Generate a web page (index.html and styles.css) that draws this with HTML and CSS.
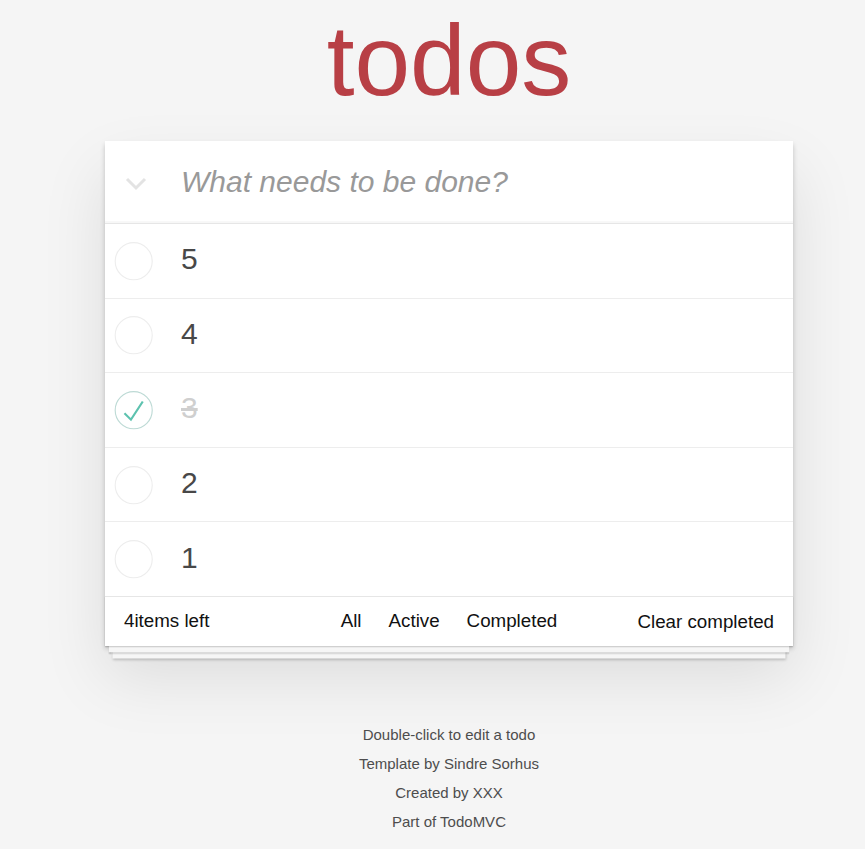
FILE: index.html
```html
<!DOCTYPE html>
<html lang="en">
<head>
<meta charset="utf-8">
<title>Todos</title>
<link rel="stylesheet" href="styles.css">
</head>
<body>
<section class="app">
  <h1 class="title">todos</h1>
  <div class="card">
    <header class="header">
      <span class="toggle-all">
        <svg width="22" height="14" viewBox="0 0 22 14"><polyline points="2,2 11,11 20,2" fill="none" stroke="#e3e3e3" stroke-width="3"/></svg>
      </span>
      <span class="new-todo">What needs to be done?</span>
    </header>
    <ul class="list">
      <li class="item">
        <svg class="check" width="50" height="50" viewBox="-10 -18 100 135"><circle cx="50" cy="50" r="50" fill="none" stroke="#ededed" stroke-width="3"/></svg>
        <span class="label">5</span>
      </li>
      <li class="item">
        <svg class="check" width="50" height="50" viewBox="-10 -18 100 135"><circle cx="50" cy="50" r="50" fill="none" stroke="#ededed" stroke-width="3"/></svg>
        <span class="label">4</span>
      </li>
      <li class="item done">
        <svg class="check" width="50" height="50" viewBox="-10 -18 100 135"><circle cx="50" cy="50" r="50" fill="none" stroke="#bddad5" stroke-width="3"/><path fill="#5dc2af" d="M72 25L42 71 27 56l-4 4 20 20 34-52z"/></svg>
        <span class="label">3</span>
      </li>
      <li class="item">
        <svg class="check" width="50" height="50" viewBox="-10 -18 100 135"><circle cx="50" cy="50" r="50" fill="none" stroke="#ededed" stroke-width="3"/></svg>
        <span class="label">2</span>
      </li>
      <li class="item">
        <svg class="check" width="50" height="50" viewBox="-10 -18 100 135"><circle cx="50" cy="50" r="50" fill="none" stroke="#ededed" stroke-width="3"/></svg>
        <span class="label">1</span>
      </li>
    </ul>
    <footer class="footer">
      <span class="count">4items left</span>
      <ul class="filters">
        <li><a class="filter">All</a></li>
        <li><a class="filter">Active</a></li>
        <li><a class="filter">Completed</a></li>
      </ul>
      <span class="clear">Clear completed</span>
    </footer>
  </div>
  <div class="info">
    <p>Double-click to edit a todo</p>
    <p>Template by Sindre Sorhus</p>
    <p>Created by XXX</p>
    <p>Part of TodoMVC</p>
  </div>
</section>
</body>
</html>
```

FILE: styles.css
```css
html, body {
  margin: 0;
  padding: 0;
}
body {
  background: #f5f5f5;
  font-family: "Liberation Sans", Arial, sans-serif;
  color: #111;
}
.app {
  width: 688px;
  margin-left: 105px;
}
.title {
  margin: 0 0 31px;
  padding-top: 10px;
  height: 100px;
  line-height: 100px;
  font-size: 100px;
  font-weight: normal;
  text-align: center;
  color: #b83f45;
}
.card {
  background: #fff;
  box-shadow: 0 2.5px 5px rgba(0, 0, 0, 0.2), 0 31px 62px rgba(0, 0, 0, 0.1);
}
.header {
  height: 82px;
  display: flex;
  align-items: center;
  box-shadow: inset 0 -2px 1px rgba(0, 0, 0, 0.03);
}
.toggle-all {
  width: 22px;
  height: 14px;
  margin-left: 20px;
  margin-top: 3px;
  display: flex;
}
.new-todo {
  margin-left: 34px;
  font-size: 30px;
  line-height: 42px;
  font-style: italic;
  color: #999;
  margin-top: -1px;
}
.list {
  list-style: none;
  margin: 0;
  padding: 0;
  border-top: 1px solid #e6e6e6;
}
.item {
  height: 73.6px;
  display: flex;
  align-items: center;
  border-bottom: 1px solid #ededed;
}
.item:last-child {
  border-bottom: none;
}
.check {
  flex: none;
  display: block;
}
.label {
  margin-left: 26px;
  font-size: 30px;
  line-height: 36px;
  color: #484848;
  margin-top: -3px;
}
.done .label {
  color: #cfcfcf;
  text-decoration: line-through;
}
.footer {
  position: relative;
  box-sizing: border-box;
  height: 50px;
  border-top: 1px solid #e6e6e6;
  padding: 0 19px;
  display: grid;
  grid-template-columns: 1fr auto 1fr;
  align-items: center;
  font-size: 18.75px;
  color: #111;
}
.footer::before {
  content: "";
  position: absolute;
  left: 0;
  right: 0;
  bottom: 0;
  height: 50px;
  overflow: hidden;
  box-shadow: 0 1.25px 1.25px rgba(0, 0, 0, 0.2),
    0 10px 0 -3.75px #f6f6f6,
    0 11.25px 1.25px -3.75px rgba(0, 0, 0, 0.2),
    0 20px 0 -7.5px #f6f6f6,
    0 21.25px 2.5px -7.5px rgba(0, 0, 0, 0.2);
  pointer-events: none;
}
.count {
  position: relative;
  justify-self: start;
}
.filters {
  position: relative;
  list-style: none;
  margin: 0;
  padding: 0;
  display: flex;
}
.filter {
  display: block;
  padding: 3.75px 8.75px;
  margin: 0 3.75px;
  border: 1.25px solid transparent;
  color: #111;
}
.clear {
  position: relative;
  justify-self: end;
  padding-top: 2px;
}
.info {
  margin-top: 81px;
  text-align: center;
  font-size: 15px;
  color: #4d4d4d;
}
.info p {
  margin: 14px 0;
  line-height: 1;
}
```
